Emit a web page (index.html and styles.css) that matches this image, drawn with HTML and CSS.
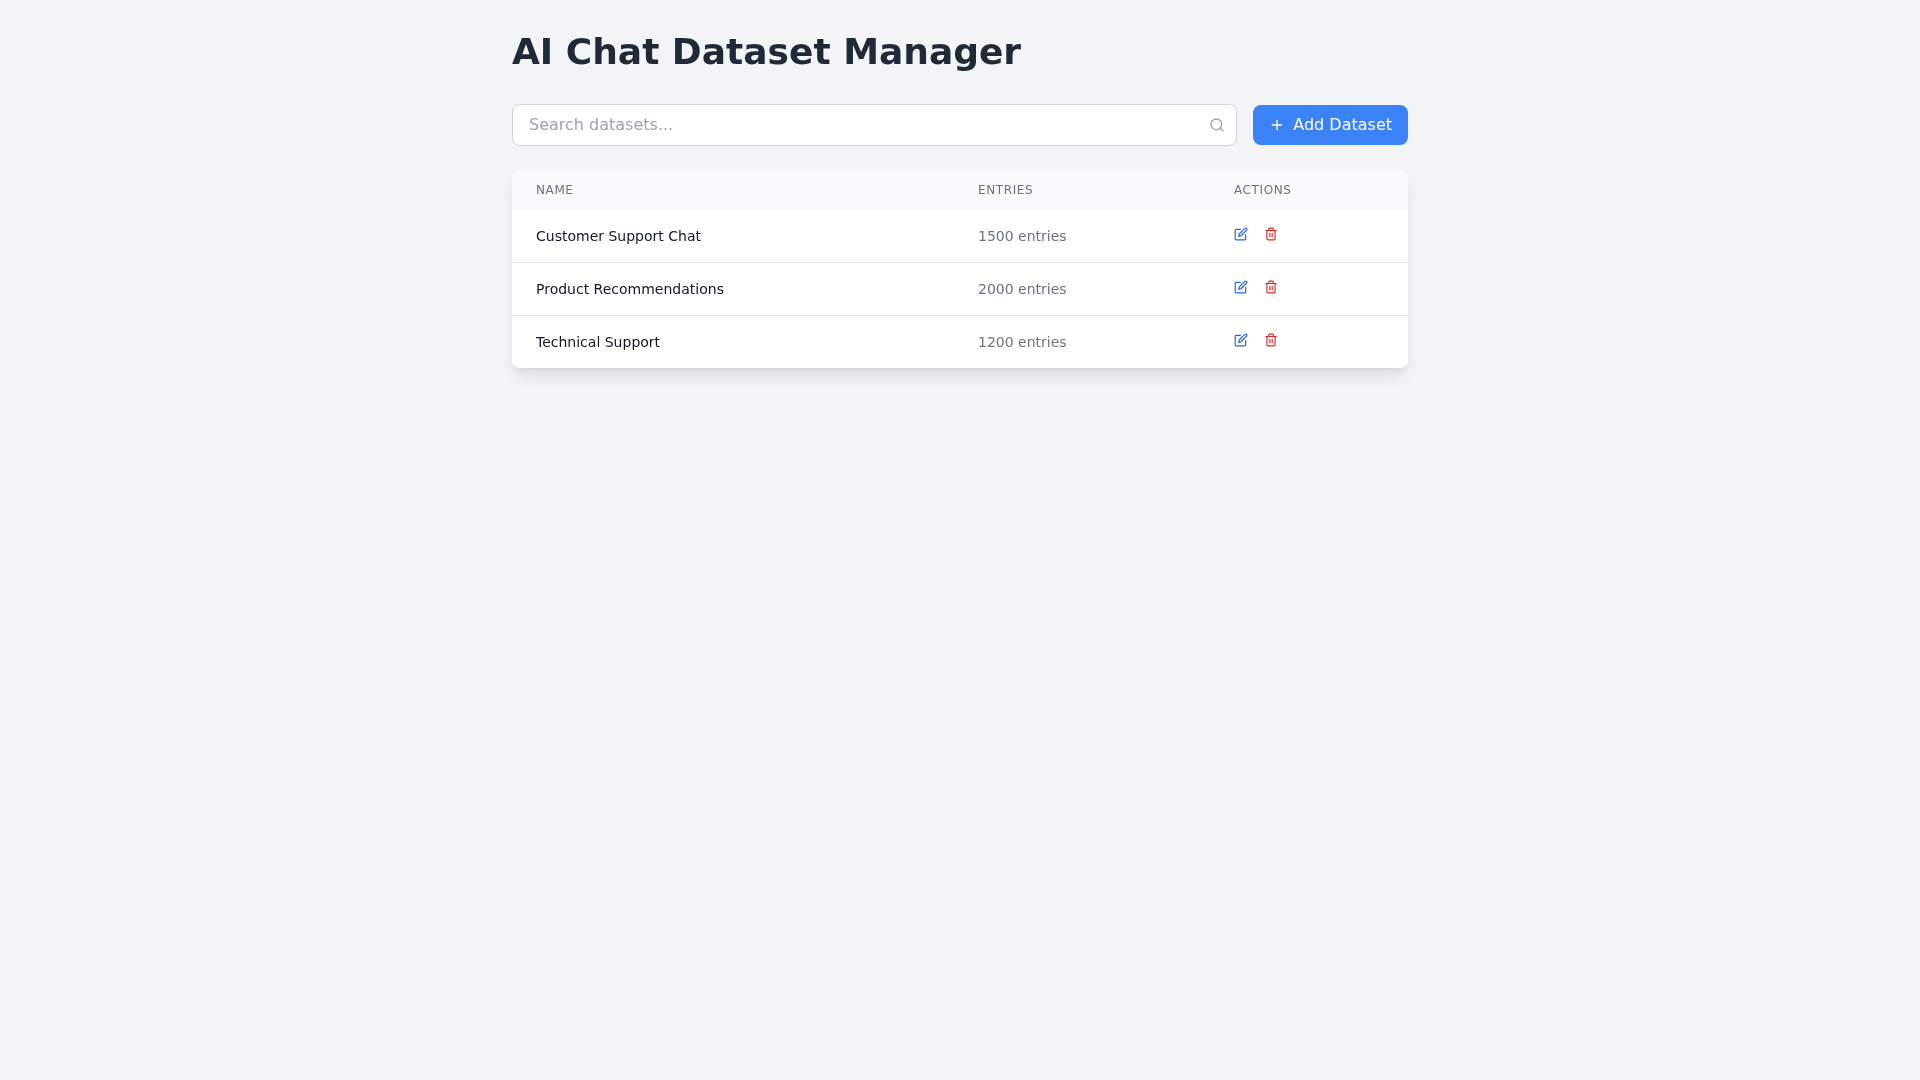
FILE: index.html
```html
<!DOCTYPE html>
<html lang="en">
<head>
<meta charset="utf-8">
<title>AI Chat Dataset Manager</title>
<link rel="stylesheet" href="styles.css">
</head>
<body>
<main class="container">
  <h1 class="title">AI Chat Dataset Manager</h1>
  <div class="toolbar">
    <div class="search">
      <input class="search-input" type="text" placeholder="Search datasets...">
      <svg class="search-icon" viewBox="0 0 24 24" fill="none" stroke="currentColor" stroke-width="2" stroke-linecap="round" stroke-linejoin="round"><circle cx="11" cy="11" r="8"/><path d="m21 21-4.3-4.3"/></svg>
    </div>
    <button class="add-btn" type="button">
      <svg class="plus-icon" viewBox="0 0 24 24" fill="none" stroke="currentColor" stroke-width="2" stroke-linecap="round" stroke-linejoin="round"><path d="M5 12h14"/><path d="M12 5v14"/></svg>
      <span>Add Dataset</span>
    </button>
  </div>
  <div class="card">
    <table class="table">
      <thead>
        <tr><th class="col-name">Name</th><th class="col-entries">Entries</th><th class="col-actions">Actions</th></tr>
      </thead>
      <tbody>
        <tr>
          <td class="name">Customer Support Chat</td>
          <td class="entries">1500 entries</td>
          <td><div class="actions">
            <svg class="icon edit" viewBox="0 0 24 24" fill="none" stroke="currentColor" stroke-width="2" stroke-linecap="round" stroke-linejoin="round"><path d="M11 4H4a2 2 0 0 0-2 2v14a2 2 0 0 0 2 2h14a2 2 0 0 0 2-2v-7"/><path d="M18.5 2.5a2.121 2.121 0 0 1 3 3L12 15l-4 1 1-4 9.5-9.5z"/></svg>
            <svg class="icon trash" viewBox="0 0 24 24" fill="none" stroke="currentColor" stroke-width="2" stroke-linecap="round" stroke-linejoin="round"><path d="M3 6h18"/><path d="M19 6v14c0 1-1 2-2 2H7c-1 0-2-1-2-2V6"/><path d="M8 6V4c0-1 1-2 2-2h4c1 0 2 1 2 2v2"/><path d="M10 11v6"/><path d="M14 11v6"/></svg>
          </div></td>
        </tr>
        <tr>
          <td class="name">Product Recommendations</td>
          <td class="entries">2000 entries</td>
          <td><div class="actions">
            <svg class="icon edit" viewBox="0 0 24 24" fill="none" stroke="currentColor" stroke-width="2" stroke-linecap="round" stroke-linejoin="round"><path d="M11 4H4a2 2 0 0 0-2 2v14a2 2 0 0 0 2 2h14a2 2 0 0 0 2-2v-7"/><path d="M18.5 2.5a2.121 2.121 0 0 1 3 3L12 15l-4 1 1-4 9.5-9.5z"/></svg>
            <svg class="icon trash" viewBox="0 0 24 24" fill="none" stroke="currentColor" stroke-width="2" stroke-linecap="round" stroke-linejoin="round"><path d="M3 6h18"/><path d="M19 6v14c0 1-1 2-2 2H7c-1 0-2-1-2-2V6"/><path d="M8 6V4c0-1 1-2 2-2h4c1 0 2 1 2 2v2"/><path d="M10 11v6"/><path d="M14 11v6"/></svg>
          </div></td>
        </tr>
        <tr>
          <td class="name">Technical Support</td>
          <td class="entries">1200 entries</td>
          <td><div class="actions">
            <svg class="icon edit" viewBox="0 0 24 24" fill="none" stroke="currentColor" stroke-width="2" stroke-linecap="round" stroke-linejoin="round"><path d="M11 4H4a2 2 0 0 0-2 2v14a2 2 0 0 0 2 2h14a2 2 0 0 0 2-2v-7"/><path d="M18.5 2.5a2.121 2.121 0 0 1 3 3L12 15l-4 1 1-4 9.5-9.5z"/></svg>
            <svg class="icon trash" viewBox="0 0 24 24" fill="none" stroke="currentColor" stroke-width="2" stroke-linecap="round" stroke-linejoin="round"><path d="M3 6h18"/><path d="M19 6v14c0 1-1 2-2 2H7c-1 0-2-1-2-2V6"/><path d="M8 6V4c0-1 1-2 2-2h4c1 0 2 1 2 2v2"/><path d="M10 11v6"/><path d="M14 11v6"/></svg>
          </div></td>
        </tr>
      </tbody>
    </table>
  </div>
</main>
</body>
</html>
```
FILE: styles.css
```css
* { box-sizing: border-box; }
html, body { margin: 0; height: 100%; }
body {
  background: #f3f4f6;
  font-family: "DejaVu Sans", sans-serif;
  color: #1f2937;
}
.container {
  width: 896px;
  margin: 0 auto;
  padding-top: 32px;
  will-change: transform;
}
.title {
  margin: 0 0 32px;
  font-size: 36px;
  line-height: 40px;
  font-weight: 700;
  color: #1f2937;
}
.toolbar {
  display: flex;
  align-items: center;
  gap: 16px;
  margin-bottom: 24px;
}
.search { position: relative; flex: 1; }
.search-input {
  display: block;
  width: 100%;
  height: 42px;
  padding: 7px 40px 9px 16px;
  border: 1px solid #d1d5db;
  border-radius: 8px;
  background: #fff;
  font: 16px/24px "DejaVu Sans", sans-serif;
  color: #1f2937;
  outline: none;
}
.search-input::placeholder { color: #9ca3af; opacity: 1; }
.search-icon {
  position: absolute;
  right: 12px;
  top: 13px;
  width: 16px;
  height: 16px;
  color: #9ca3af;
}
.add-btn {
  display: flex;
  align-items: center;
  gap: 8px;
  height: 40px;
  padding: 0 16px;
  border: 0;
  border-radius: 8px;
  background: #3b82f6;
  color: #fff;
  font: 16px/24px "DejaVu Sans", sans-serif;
  white-space: nowrap;
}
.plus-icon { width: 16px; height: 16px; }
.card {
  background: #fff;
  border-radius: 8px;
  overflow: hidden;
  box-shadow: 0 10px 15px -3px rgba(0,0,0,.1), 0 4px 6px -4px rgba(0,0,0,.1);
}
.table {
  width: 100%;
  border-collapse: separate;
  border-spacing: 0;
  table-layout: fixed;
}
thead { background: #f9fafb; }
th {
  height: 40px;
  padding: 12px 24px;
  text-align: left;
  font-size: 12px;
  line-height: 16px;
  font-weight: 400;
  letter-spacing: .6px;
  text-transform: uppercase;
  color: #6b7280;
}
.col-name { width: 442px; }
.col-entries { width: 256px; }
td {
  height: 53px;
  padding: 16px 24px;
  font-size: 14px;
  line-height: 20px;
  border-bottom: 1px solid #e5e7eb;
}
tbody tr:last-child td { border-bottom: 0; height: 52px; }
.name { color: #111827; }
.entries { color: #6b7280; }
.actions { display: flex; gap: 16px; height: 20px; padding-top: 1px; }
.icon { width: 14px; height: 14px; display: block; }
.edit { color: #2563eb; }
.trash { color: #dc2626; }
```
